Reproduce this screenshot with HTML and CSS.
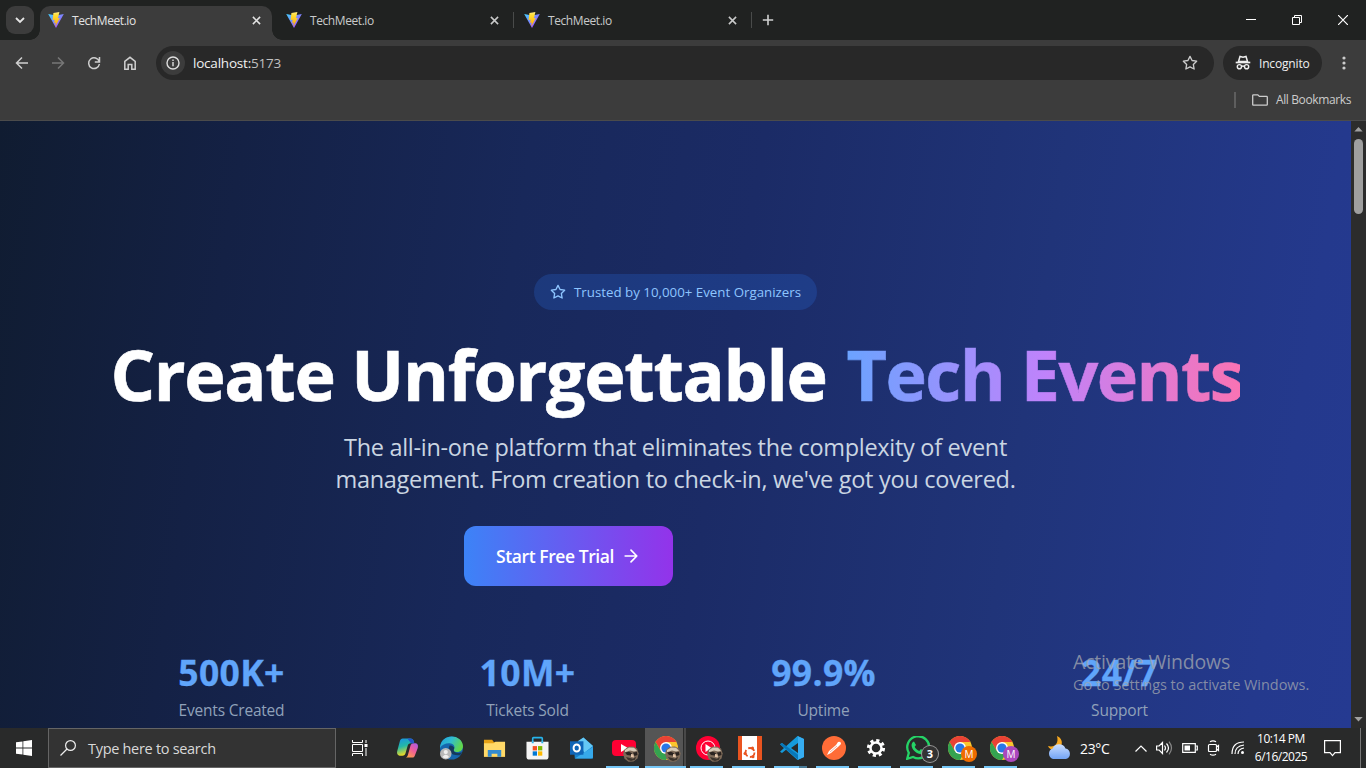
FILE: index.html
```html
<!DOCTYPE html>
<html lang="en">
<head>
<meta charset="utf-8">
<title>TechMeet.io</title>
<link rel="stylesheet" href="styles.css">
</head>
<body>
<svg class="defs" aria-hidden="true">
  <defs>
    <linearGradient id="vite-a" x1="0" y1="0" x2="1" y2="1"><stop offset="0" stop-color="#41d1ff"/><stop offset="1" stop-color="#bd34fe"/></linearGradient>
    <linearGradient id="vite-b" x1="0" y1="0" x2="0" y2="1"><stop offset="0" stop-color="#ffea83"/><stop offset=".2" stop-color="#ffdd35"/><stop offset="1" stop-color="#ffa800"/></linearGradient>
    <linearGradient id="cop-a" x1="0" y1="0" x2=".3" y2="1"><stop offset="0" stop-color="#1790e8"/><stop offset=".5" stop-color="#23b8a8"/><stop offset="1" stop-color="#f2dc20"/></linearGradient>
    <linearGradient id="cop-b" x1="1" y1="0" x2=".3" y2="1"><stop offset="0" stop-color="#a45bee"/><stop offset=".5" stop-color="#ee5b9b"/><stop offset="1" stop-color="#ff9f4a"/></linearGradient>
    <linearGradient id="edge-a" x1="0" y1="0" x2="1" y2=".4"><stop offset="0" stop-color="#219fd9"/><stop offset=".5" stop-color="#31bdd0"/><stop offset="1" stop-color="#60d64c"/></linearGradient>
    <linearGradient id="cloud-a" x1="0" y1="0" x2="0" y2="1"><stop offset="0" stop-color="#c9ddff"/><stop offset="1" stop-color="#72a3f3"/></linearGradient>
    <symbol id="vite" viewBox="0 0 16 16"><path d="M.2 2 8 16 15.8 2 8 3.4Z" fill="url(#vite-a)"/><path d="m11.4.1-6 1-.8 7 2.200-.3-.8 3 1.700-.3-.4 4 4.500-8.500-2 .2.900-2.700-.1.100Z" fill="url(#vite-b)"/></symbol>
    <symbol id="close" viewBox="0 0 10 10"><path d="m1 1 8 8M9 1 1 9" stroke="currentColor" stroke-width="1.7"/></symbol>
    <symbol id="star" viewBox="0 0 24 24"><path d="m12 2 3.09 6.26L22 9.27l-5 4.87 1.18 6.88L12 17.77l-6.18 3.25L7 14.14 2 9.27l6.91-1.01Z" fill="none" stroke="currentColor" stroke-width="2" stroke-linejoin="round"/></symbol>
    <symbol id="chrome" viewBox="0 0 24 24"><circle cx="12" cy="12" r="12" fill="#fbc52d"/><path d="M1.6 6A12 12 0 0 1 22.4 6H12l-5.2 9Z" fill="#e94235"/><path d="M1.6 6A12 12 0 0 0 12 24l5.2-9L12 17.5 6.8 15Z" fill="#34a350"/><circle cx="12" cy="12" r="6" fill="#fff"/><circle cx="12" cy="12" r="4.6" fill="#2877e8"/></symbol>
    <symbol id="avatar" viewBox="0 0 16 16"><path d="M1 4 5 .8l5-.3 4 2 1.700 5-1.200 5-4 3-5 .2-4-3L.2 8Z" fill="#7d6a58"/><path d="M2 4 6 1.500l5 .2 3 3-3 .8-4-1-5 1.800Z" fill="#d8cbb8"/><path d="m2 6.500 4-.8 3 1.500-1 2.300-4-.5ZM10 6.500l4-.5.500 3-3 1Z" fill="#2a2320"/><path d="m8 8 2.500.5.5 3-3-.5Z" fill="#e4c4a7"/><path d="m3 11 4 1 3 .8 3-2-1 3-4 1.200-3-1Z" fill="#3b332c"/></symbol>
  </defs>
</svg>

<header class="tabstrip">
  <button class="tab-search"><svg width="10" height="7" viewBox="0 0 10 7"><path d="m1 1 4 4 4-4" fill="none" stroke="#e5e5e5" stroke-width="1.8"/></svg></button>
  <div class="tab tab-active"><svg class="favicon"><use href="#vite"/></svg><span>TechMeet.io</span><svg class="tab-close"><use href="#close"/></svg></div>
  <div class="tab"><svg class="favicon"><use href="#vite"/></svg><span>TechMeet.io</span><svg class="tab-close"><use href="#close"/></svg><i></i></div>
  <div class="tab"><svg class="favicon"><use href="#vite"/></svg><span>TechMeet.io</span><svg class="tab-close"><use href="#close"/></svg><i></i></div>
  <svg class="new-tab" viewBox="0 0 12 12"><path d="M6 .8v10.4M.8 6h10.4" stroke="#d0d1d1" stroke-width="1.6"/></svg>
  <div class="window-controls">
    <svg viewBox="0 0 10 10"><path d="M0 4.5h10" stroke="#fff"/></svg>
    <svg viewBox="0 0 10 10"><path d="M.5 2.5h7v7h-7ZM2.5 2.5v-2h7v7h-2" fill="none" stroke="#fff"/></svg>
    <svg viewBox="0 0 10 10"><path d="m0 0 10 10M10 0 0 10" stroke="#fff" stroke-width="1.2"/></svg>
  </div>
</header>

<section class="toolbar">
  <div class="nav">
    <svg viewBox="0 0 16 16"><path d="M14 8H3M8 2.5 2.5 8 8 13.5" /></svg>
    <svg class="dim" viewBox="0 0 16 16"><path d="M2 8h11M8 2.5 13.500 8 8 13.500"/></svg>
    <svg viewBox="0 0 16 16"><path d="M13.200 6.500A5.400 5.400 0 1 0 13.400 9M13.500 2v5H8.800"/></svg>
    <svg viewBox="0 0 16 16"><path d="M2.800 6.300 8 2.300l5.200 4v8H9.800V9.500H6.200v4.800H2.800Z"/></svg>
  </div>
  <div class="omnibox">
    <span class="info"><svg viewBox="0 0 16 16"><circle cx="8" cy="8" r="6" fill="none" stroke="#dedede" stroke-width="1.400"/><path d="M8 7v4.200M8 4.500v1.500" stroke="#dedede" stroke-width="1.400"/></svg></span>
    <span class="url">localhost:<em>5173</em></span>
    <svg class="bookmark"><use href="#star"/></svg>
  </div>
  <div class="incognito">
    <svg viewBox="0 0 16 16"><path d="M3.500 6.500 5 1.500l3 .7 3-.7 1.500 5Z" fill="none" stroke="#eee" stroke-width="1.500"/><path d="M.7 7.500h14.600" stroke="#eee" stroke-width="1.700"/><circle cx="4.400" cy="11.700" r="2.100" fill="none" stroke="#eee" stroke-width="1.400"/><circle cx="11.600" cy="11.700" r="2.100" fill="none" stroke="#eee" stroke-width="1.400"/><path d="M6.500 11.500q1.500-1 3 0" fill="none" stroke="#eee" stroke-width="1.300"/></svg>
    <span>Incognito</span>
  </div>
  <svg class="kebab" viewBox="0 0 4 14"><circle cx="2" cy="2" r="1.600"/><circle cx="2" cy="7" r="1.600"/><circle cx="2" cy="12" r="1.600"/></svg>
</section>
<section class="bookmarks"><i></i><svg viewBox="0 0 16 12"><path d="M1.500.8h4.300l1.600 1.600h7.100q.8 0 .8.800v7.200q0 .8-.8.800H1.500q-.8 0-.8-.8V1.600q0-.8.8-.8Z" fill="none" stroke="#ccc" stroke-width="1.300"/></svg><span>All Bookmarks</span></section>

<main class="viewport">
  <section class="hero">
    <div class="badge"><svg><use href="#star"/></svg><span>Trusted by 10,000+ Event Organizers</span></div>
    <h1><span class="h-main">Create Unforgettable</span><span class="h-accent">Tech Events</span></h1>
    <p><span class="line1">The all-in-one platform that eliminates the complexity of event</span><br><span class="line2">management. From creation to check-in, we've got you covered.</span></p>
    <button class="cta"><span>Start Free Trial</span><svg viewBox="0 0 24 24"><path d="M5 12h14M12 5l7 7-7 7" fill="none" stroke="#fff" stroke-width="2" stroke-linecap="round" stroke-linejoin="round"/></svg></button>
    <div class="stats">
      <div><strong>500K+</strong><span>Events Created</span></div>
      <div><strong>10M+</strong><span>Tickets Sold</span></div>
      <div><strong>99.9%</strong><span>Uptime</span></div>
      <div><strong>24/7</strong><span>Support</span></div>
    </div>
  </section>
  <aside class="scrollbar"><svg viewBox="0 0 10 6"><path d="M0 5.500 5 0l5 5.500Z"/></svg><b></b><svg class="down" viewBox="0 0 10 6"><path d="M0 0 5 5.500 10 0Z"/></svg></aside>
  <div class="watermark"><span class="wm-title">Activate Windows</span><span class="wm-sub">Go to Settings to activate Windows.</span></div>
</main>

<footer class="taskbar">
  <div class="start"><svg viewBox="0 0 16 16"><path d="M0 2.300 6.500 1.400v6.200H0ZM7.300 1.300 16 0v7.600H7.300ZM0 8.400h6.500v6.200L0 13.700ZM7.300 8.400H16V16l-8.700-1.300Z" fill="#fff"/></svg></div>
  <div class="search"><svg viewBox="0 0 16 16"><circle cx="10.500" cy="5.500" r="4.900"/><path d="M7 9 .5 15.500"/></svg><span>Type here to search</span></div>
  <div class="taskview"><svg viewBox="0 0 16 16"><path d="M.5 0v2.500h10V0M.5 4.500h10v7H.5ZM.5 16v-2.500h10V16M14 0v3M14 8v8" fill="none" stroke="#fff"/><path d="M12.500 4h3v3h-3Z" fill="#fff"/></svg></div>
  <nav class="apps">
    <div class="app wide"><svg viewBox="0 0 24 24"><path d="M7 2h8c2 0 3 1 3.500 3l.6 2h-3.500c-2 0-3 1-3.500 3l-2 7c-.5 2-1.500 3-3.500 3H5c-3 0-4.500-2-3.700-5L4 5c.6-2 1.500-3 3-3Z" fill="url(#cop-a)"/><path d="M17 22H9c2 0 3-1 3.500-3L15 10c.5-2 1.500-3 3.500-3h1c3 0 4 2 3.200 5L20 19c-.6 2-1.500 3-3 3Z" fill="url(#cop-b)"/><path d="M12 2h3c2 0 3 1 3.500 3l.6 2h-3.500Z" fill="#2356c9"/></svg></div>
    <div class="app wide"><svg viewBox="0 0 24 24"><circle cx="12" cy="12" r="12" fill="#1666ae"/><path d="M0 12C1-4 23-3 24 10c0 5-4 7-8 6-3-1-2-2-1-4C16 6 4 5 0 12Z" fill="url(#edge-a)"/><path d="M10 9.500c-3 6 2 11 11 10l2-3c-7 2-10-1-8-4.500-1-2-3-3-5-2.500Z" fill="#15395c"/><circle cx="6" cy="18" r="6" fill="#b8b8b8"/><circle cx="6" cy="16.200" r="2.200" fill="#eee"/><path d="M2.500 21.500q3.500-5 7 0-3.500 3-7 0Z" fill="#eee"/></svg></div>
    <div class="app wide"><svg viewBox="0 0 24 24"><path d="M1 3.500h8.500l2 2.500H23v15H1Z" fill="#e6a115"/><path d="M1 7h10l2-1.500h10V21H1Z" fill="#ffd968"/><path d="M5 21v-7h14v7h-4v-3H9v3Z" fill="#338bd0"/></svg></div>
    <div class="app wide"><svg viewBox="0 0 24 24"><path d="M7 7V2q0-.8.800-.8h8.400q.8 0 .8.800v5" fill="none" stroke="#26b4ec" stroke-width="1.700"/><path d="M.5 5.500h23V21q0 3-3 3h-17q-3 0-3-3Z" fill="#f4f4f4"/><path d="M6 5.500h2V7H6ZM16 5.500h2V7h-2Z" fill="#26b4ec"/><path d="M7 10h4.500v4.500H7Z" fill="#f25022"/><path d="M12.500 10H17v4.500h-4.500Z" fill="#7fba00"/><path d="M7 15.500h4.500V20H7Z" fill="#0078d4"/><path d="M12.500 15.500H17V20h-4.500Z" fill="#ffb900"/></svg></div>
    <div class="app wide"><svg viewBox="0 0 24 24"><path d="m4 9 10-8 10 9v13H5Z" fill="#1781cb"/><path d="M8 5 14 1l10 9-9 7Z" fill="#64c8f5"/><path d="m5 23 19-12v10q0 2-2 2Z" fill="#36a9eb"/><path d="M0 5h14v14H0Z" fill="#0f65b7"/><ellipse cx="7" cy="12" rx="3.300" ry="3.700" fill="none" stroke="#fff" stroke-width="2"/></svg></div>
    <div class="app open"><svg viewBox="0 0 24 24"><rect y="4" width="24" height="16" rx="4" fill="#ff0033"/><path d="m9 8 7 4-7 4Z" fill="#fff"/></svg><svg class="avatar"><use href="#avatar"/></svg></div>
    <div class="app open current"><svg><use href="#chrome"/></svg><svg class="avatar"><use href="#avatar"/></svg></div>
    <div class="app open"><svg viewBox="0 0 24 24"><circle cx="12" cy="12" r="12" fill="#ff0033"/><circle cx="12" cy="12" r="7" fill="none" stroke="#fff"/><path d="m9.500 8 6 4-6 4Z" fill="#fff"/></svg><svg class="avatar"><use href="#avatar"/></svg></div>
    <div class="app open"><svg viewBox="0 0 24 24"><path d="M0 0h24v24H0Z" fill="#e95420"/><path d="M4 0h15v24H4Z" fill="#fff"/><circle cx="12" cy="16.500" r="4.500" fill="none" stroke="#e95420" stroke-width="1.800" stroke-dasharray="7 2.400"/><circle cx="7" cy="17.500" r="1.500" fill="#e95420"/><circle cx="14.500" cy="12" r="1.500" fill="#e95420"/><circle cx="15" cy="20.800" r="1.500" fill="#e95420"/></svg></div>
    <div class="app open split"><svg viewBox="0 0 24 24"><path d="M17.500 0 24 3v18l-6.500 3L6 13.700 2 17l-2-1.200L4 12 0 8.200 2 7l4 3.300ZM18 7l-7 5 7 5Z" fill="#159bdc"/><path d="M17.500 0 24 3v18l-6.500 3q.5 0 .5-1V1Z" fill="#36adf1"/><path d="m0 8.200 2-1.200 16 11.800v4.700Z" fill="#0877b9"/></svg></div>
    <div class="app open"><svg viewBox="0 0 24 24"><circle cx="12" cy="12" r="12" fill="#ff6c37"/><path d="m5 19 2-4 7-6 2-3q3-1 3 2l-3 3-7 6Z" fill="#fff"/><path d="m8 16 7-6" stroke="#f3a084" stroke-width=".8"/></svg></div>
    <div class="app open"><svg viewBox="0 0 24 24"><circle cx="12" cy="12" r="7.500" fill="none" stroke="#fff" stroke-width="3.200" stroke-dasharray="3.100 2.790"/><circle cx="12" cy="12" r="5.500" fill="none" stroke="#fff" stroke-width="2.500"/></svg></div>
    <div class="app open"><svg viewBox="0 0 24 24"><path d="m1.200 22.800 1.600-5.900A11 11 0 1 1 7.100 21Z" fill="none" stroke="#25d366" stroke-width="2.300"/><path d="M8 5.500 10 9 8.700 10.700c1 2 2.500 3.400 4.600 4.200l1.600-1.800 3.500 2c-.5 3-3 3.500-5.400 2.700-4-1.300-7-4.500-7.400-8C5.400 7.500 6.500 6 8 5.500Z" fill="#25d366"/></svg><span class="count">3</span></div>
    <div class="app open"><svg><use href="#chrome"/></svg><span class="profile orange">M</span></div>
    <div class="app open"><svg><use href="#chrome"/></svg><span class="profile purple">M</span></div>
  </nav>
  <div class="weather"><svg viewBox="0 0 25 24"><path d="M10 0c7 3 6 11 0 14-4 1-8-1-9-4 7 2 11-3 9-10Z" fill="#f7a820"/><path d="M6 23a5.500 5.500 0 0 1-.3-10.500 7 7 0 0 1 12.800 0A5.400 5.400 0 0 1 19 23Z" fill="url(#cloud-a)"/></svg><span>23°C</span></div>
  <div class="tray">
    <svg class="t-up" viewBox="0 0 12 7"><path d="m.5 6.500 5.500-5.500 5.500 5.500"/></svg>
    <svg class="t-vol" viewBox="0 0 17 14"><path d="M.6 5h2.500L6.500 1.500v11L3.100 9H.6ZM8.500 4.500q2 2.500 0 5M10.500 2.500q4 4.500 0 9"/><path d="M13 .6q5 6.400 0 12.800" stroke="#888"/></svg>
    <svg class="t-bat" viewBox="0 0 16 10"><path d="M.7.700h12.600v8.600H.7ZM14 3h1.300v4H14"/><path d="M2.500 2.500H8v5H2.500Z" fill="#fff" stroke="none"/></svg>
    <svg class="t-cam" viewBox="0 0 14 16"><path d="M2.500 4.500h6q1 0 1 1v5q0 1-1 1h-6q-1 0-1-1v-5q0-1 1-1ZM9.500 7l2-1.500v5l-2-1.500M3 1.800q3-2 6 0M3 14.200q3 2 6 0"/></svg>
    <svg class="t-net" viewBox="0 0 14 14"><path d="M1 13Q1 1 13 1M4 13q0-8 9-9M7 13q0-5 6-6"/><circle cx="11.500" cy="11.500" r="1.500" fill="#fff" stroke="none"/></svg>
    <div class="clock"><span class="time">10:14 PM</span><span>6/16/2025</span></div>
    <svg class="t-note" viewBox="0 0 17 17"><path d="M.6.600h15.800v12H11l-2.500 3L6 12.600H.6Z"/></svg>
    <i></i>
  </div>
</footer>
</body>
</html>
```

FILE: styles.css
```css
* { box-sizing: border-box; }
body { margin: 0; width: 1366px; height: 768px; overflow: hidden; display: flex; flex-direction: column; background: #3c3c3c; font-family: "Open Sans", "Noto Sans", sans-serif; }
button { border: 0; padding: 0; font-family: inherit; }
svg { display: block; flex: none; }
span { white-space: nowrap; }
.defs { position: absolute; width: 0; height: 0; }

.tabstrip { height: 40px; flex: none; display: flex; align-items: center; background: #202221; padding-left: 6px; }
.tab-search { width: 28px; height: 28px; border-radius: 9px; background: #3c3c3c; display: grid; place-items: center; margin-right: 6px; }
.tab { width: 238px; height: 34px; align-self: flex-end; display: flex; align-items: center; padding: 0 0 6px 8px; color: #c9caca; font-size: 12px; position: relative; }
.tab:nth-child(3) { margin-left: 6px; }
.tab-active { width: 232px; background: #3c3c3c; border-radius: 10px 10px 0 0; color: #e3e3e3; }
.tab-active::before, .tab-active::after { content: ""; position: absolute; bottom: 0; width: 10px; height: 10px; }
.tab-active::before { left: -10px; background: radial-gradient(circle at 0 0, transparent 9.5px, #3c3c3c 10px); }
.tab-active::after { right: -10px; background: radial-gradient(circle at 100% 0, transparent 9.5px, #3c3c3c 10px); }
.favicon { width: 16px; height: 16px; margin-right: 8px; }
.tab span { width: 180px; letter-spacing: -.42px; }
.tab-close { width: 9px; height: 9px; margin-left: -.5px; }
.tab i { width: 1px; height: 16px; background: #494b4a; margin-left: 14px; }
.new-tab { width: 12px; height: 12px; margin-left: 8px; }
.window-controls { display: flex; gap: 36px; margin-left: auto; padding-right: 18px; }
.window-controls svg { width: 10px; height: 10px; }

.toolbar { height: 46px; flex: none; display: flex; align-items: center; padding-left: 14px; background: #3c3c3c; }
.nav { display: flex; gap: 20px; width: 142px; }
.nav svg { width: 16px; height: 16px; }
.nav path { fill: none; stroke: #cfcfcf; stroke-width: 1.5; }
.nav .dim path { stroke: #777; }
.omnibox { width: 1058px; height: 34px; border-radius: 17px; background: #282828; display: flex; align-items: center; padding: 0 16px 0 5px; }
.info { width: 24px; height: 24px; border-radius: 50%; background: #3c3c3c; display: grid; place-items: center; margin-right: 8px; }
.info svg { width: 16px; height: 16px; }
.url { color: #f0f0f0; font-size: 13.5px; letter-spacing: -.21px; }
.url em { color: #c0c0c0; font-style: normal; }
.bookmark { width: 16px; height: 16px; margin-left: auto; color: #ccc; }
.incognito { width: 99px; height: 34px; border-radius: 17px; background: #282828; display: flex; align-items: center; gap: 8px; margin-left: 9px; padding-left: 12px; color: #f0f0f0; font-size: 12px; letter-spacing: -.17px; }
.incognito svg { width: 16px; height: 16px; }
.kebab { width: 4px; height: 14px; margin-left: 20px; fill: #ccc; }
.bookmarks { height: 35px; flex: none; border-bottom: 1px solid #4b4b4b; display: flex; align-items: center; justify-content: flex-end; padding: 0 15px 7px 0; color: #ccc; font-size: 12px; }
.bookmarks i { width: 2px; height: 16px; background: #5e5e5e; margin-right: 16px; }
.bookmarks svg { width: 16px; height: 12px; margin-right: 8px; }
.bookmarks span { letter-spacing: -.38px; }

.viewport { height: 607px; flex: none; display: flex; position: relative; overflow: hidden; }
.hero { width: 1351px; height: 607px; display: flex; flex-direction: column; align-items: center; padding-top: 153px; background: linear-gradient(99deg, #101c31 0%, #142145 17%, #18285a 37%, #1b2b66 53%, #203479 74%, #24398d 93%, #253a91 100%); }
.badge { flex: none; width: 283px; height: 36px; border-radius: 18px; background: rgba(43, 127, 255, .2); display: flex; align-items: center; padding-left: 16px; gap: 8px; color: #8ec5ff; font-size: 13.3px; }
.badge svg { width: 16px; height: 16px; }
.badge span { letter-spacing: 0; }
h1 { flex: none; display: flex; gap: 20px; margin: 22px 0 0; width: 1128px; height: 99px; color: #fff; font-size: 70px; line-height: 84px; font-weight: 700; -webkit-text-stroke-width: .6px; }
.h-main { width: 716px; letter-spacing: -1.3px; margin-left: -1px; }
.h-accent { width: 393px; letter-spacing: -1.55px; background: linear-gradient(90deg, #6ba3ff, #bf83fb 50%, #f973b4); background-clip: text; -webkit-background-clip: text; color: transparent; }
.hero p { margin: 0; height: 95px; color: #cad5e2; font-size: 23.5px; line-height: 32px; text-align: center; }
.line1, .line2 { letter-spacing: -.3px; }
.cta { flex: none; width: 209px; height: 60px; margin-left: -214px; border-radius: 12px; background: linear-gradient(90deg, #3c83f7, #9333ea); color: #fff; font-size: 17.5px; font-weight: 600; display: flex; align-items: center; padding-left: 32px; gap: 7px; }
.cta span { width: 118px; letter-spacing: -.43px; }
.cta svg { width: 20px; height: 20px; }
.stats { flex: none; width: 1152px; display: grid; grid-template-columns: repeat(4, 1fr); gap: 32px; margin-top: 65px; text-align: center; }
.stats div { display: flex; flex-direction: column; align-items: center; }
.stats strong { height: 47px; color: #60a5fa; font-size: 35.5px; line-height: 42px; letter-spacing: .35px; -webkit-text-stroke-width: .3px; }
.stats span { color: #90a1b9; font-size: 15.5px; line-height: 24px; letter-spacing: -.2px; }
.scrollbar { width: 15px; background: #2c2c2c; display: flex; flex-direction: column; align-items: center; padding: 6px 0; }
.scrollbar svg { width: 9px; height: 5px; fill: #a0a0a0; }
.scrollbar b { width: 9px; height: 75px; border-radius: 5px; background: #9f9f9f; margin-top: 7px; }
.scrollbar .down { margin-top: auto; }
.watermark { position: absolute; left: 1073px; top: 528px; display: flex; flex-direction: column; color: rgba(160, 165, 175, .78); }
.wm-title { font-size: 19.5px; line-height: 26px; letter-spacing: -.18px; }
.wm-sub { font-size: 14.5px; line-height: 20px; letter-spacing: -.04px; }

.taskbar { height: 40px; flex: none; display: flex; align-items: stretch; background: #292a2a; color: #fff; }
.start { width: 48px; display: grid; place-items: center; }
.start svg { width: 16px; height: 16px; }
.search { width: 288px; border: 1px solid #656565; background: #333; display: flex; align-items: center; gap: 12px; padding-left: 11px; color: #d9d9d9; font-size: 14.5px; }
.search svg { width: 16px; height: 16px; fill: none; stroke: #eee; stroke-width: 1.2; }
.search span { letter-spacing: -.3px; }
.taskview { width: 50px; display: flex; align-items: center; padding-left: 16px; }
.taskview svg { width: 16px; height: 16px; }
.apps { display: flex; }
.app { flex: none; width: 42px; display: grid; place-items: center; position: relative; }
.app > svg { width: 24px; height: 24px; }
.wide { width: 43.4px; }
.wide > svg { width: 23px; }
.open::after { content: ""; position: absolute; left: 3px; bottom: 0; width: 33px; height: 2px; background: #76c7f7; }
.current { background: linear-gradient(90deg, #555 38px, #292a2a 38px 39px, #484848 39px 41px, transparent 41px); }
.current::after { left: 0; width: 41px; }
.split::after { background: linear-gradient(90deg, #76c7f7 75%, #4a7b97 75%); }
.app > .avatar { position: absolute; width: 16px; height: 16px; left: 20px; top: 18px; }
.count, .profile { position: absolute; border-radius: 50%; width: 16px; height: 16px; left: 22px; top: 18px; text-align: center; font-size: 10px; line-height: 16px; }
.count { left: 18px; left: 25px; background: #333; box-shadow: 0 0 0 1px #999; font-size: 11px; font-weight: 700; }
.orange { background: #ef6c00; }
.purple { background: #ab47bc; }
.weather { flex: none; display: flex; align-items: center; gap: 8px; width: 111px; padding-left: 24px; font-size: 14px; }
.weather svg { width: 25px; height: 24px; }
.weather span { letter-spacing: -.3px; }
.tray { display: flex; align-items: center; flex: 1; }
.tray svg { fill: none; stroke: #fff; stroke-width: 1.2; }
.t-up { width: 12px; height: 7px; margin-left: 1px; }
.t-vol { width: 17px; height: 14px; margin-left: 9px; }
.t-bat { width: 16px; height: 10px; margin-left: 9px; }
.t-cam { width: 14px; height: 16px; margin-left: 9px; }
.t-net { width: 14px; height: 14px; margin-left: 10px; }
.clock { width: 54px; display: flex; flex-direction: column; align-items: center; margin-left: 9px; font-size: 12px; line-height: 18px; letter-spacing: -.5px; }
.t-note { width: 17px; height: 17px; margin-left: 16px; }
.tray i { width: 1px; height: 40px; background: #777; margin-left: 19px; }
```
